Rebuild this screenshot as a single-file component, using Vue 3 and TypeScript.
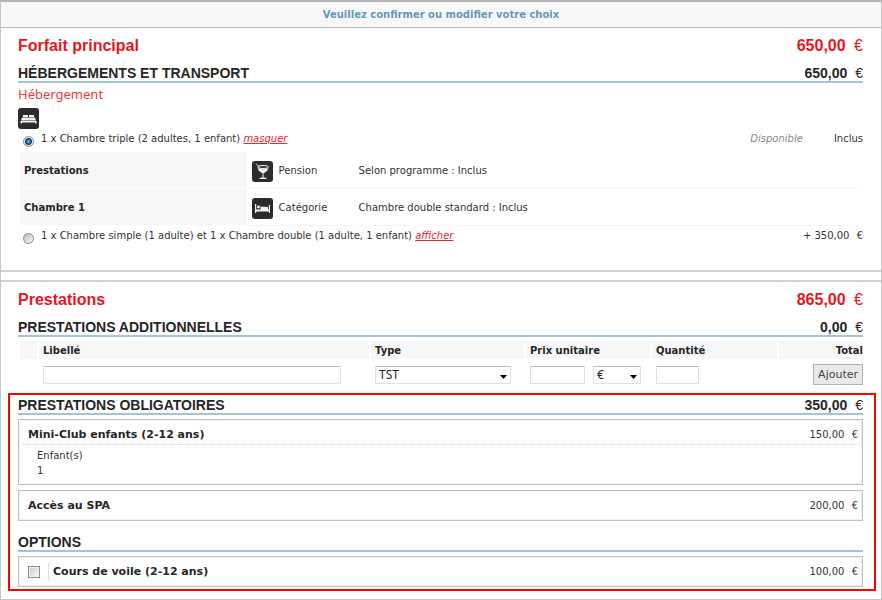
<script setup lang="ts">
import { ref } from 'vue'

interface Detail {
  label: string
  icon: 'glass' | 'bed'
  kind: string
  value: string
}

interface Extra {
  name: string
  price: string
  unit?: string
  count?: number
}

const room = ref('triple')
const label = ref('')
const kind = ref('TST')
const unitPrice = ref('')
const currency = ref('€')
const quantity = ref('')
const sailing = ref(false)

const details: Detail[] = [
  { label: 'Prestations', icon: 'glass', kind: 'Pension', value: 'Selon programme : Inclus' },
  { label: 'Chambre 1', icon: 'bed', kind: 'Catégorie', value: 'Chambre double standard : Inclus' },
]

const mandatory: Extra[] = [
  { name: 'Mini-Club enfants (2-12 ans)', price: '150,00', unit: 'Enfant(s)', count: 1 },
  { name: 'Accès au SPA', price: '200,00' },
]
</script>

<template>
  <main class="page">
    <header class="banner">Veuillez confirmer ou modifier votre choix</header>

    <section class="panel">
      <h1 class="title"><span>Forfait principal</span><span class="sum">650,00 <i class="cur">€</i></span></h1>
      <h2 class="subtitle"><span>HÉBERGEMENTS ET TRANSPORT</span><span class="sum">650,00 <i class="cur">€</i></span></h2>
      <h3 class="group">Hébergement</h3>
      <svg class="icon" viewBox="0 0 21 21" aria-hidden="true">
        <rect width="21" height="21" rx="3" fill="#2b2b2b" />
        <path d="M5 7h5v2H5zM11 7h5v2h-5zM4 9.500h13l1 3H3zM2.500 13h16v2.500h-1.500v-1H4v1H2.500z" fill="#f4f4f4" />
      </svg>

      <div class="choice">
        <input id="triple" v-model="room" class="radio" type="radio" name="room" value="triple" />
        <span class="choice-text"><label for="triple">1 x Chambre triple (2 adultes, 1 enfant)</label> <a href="#details">masquer</a></span>
        <em class="status">Disponible</em>
        <span class="cost">Inclus</span>
      </div>

      <table id="details" class="details">
        <tbody>
          <tr v-for="d in details" :key="d.label">
            <th scope="row">{{ d.label }}</th>
            <td class="kind">
              <div class="kind-in">
                <svg v-if="d.icon === 'glass'" class="icon" viewBox="0 0 21 21" aria-hidden="true">
                  <rect width="21" height="21" rx="3" fill="#2b2b2b" />
                  <path d="M4 2.500l3.500 4" stroke="#ddd" stroke-width="1" fill="none" />
                  <ellipse cx="11" cy="6" rx="5.500" ry="1.500" fill="none" stroke="#f4f4f4" />
                  <path d="M5.500 7c2 1.500 9 1.500 11 0-1 3-3 4.500-5 5v4.500c1.500 0 3 .3 3.500 1.500H7c.500-1.200 2-1.500 3.500-1.500V12c-2-.5-4-2-5-5z" fill="#f4f4f4" />
                </svg>
                <svg v-else class="icon" viewBox="0 0 21 21" aria-hidden="true">
                  <rect width="21" height="21" rx="3" fill="#2b2b2b" />
                  <path d="M3 6h1.200v5.500h12.600V7H18v8h-1.200v-1.500H4.200V15H3z" fill="#f4f4f4" />
                  <path d="M8.500 8.500l7.500.5v3H8.500z" fill="#f4f4f4" />
                  <circle cx="6.500" cy="9" r="1.400" fill="#f4f4f4" />
                </svg>
                {{ d.kind }}
              </div>
            </td>
            <td>{{ d.value }}</td>
          </tr>
        </tbody>
      </table>

      <div class="choice">
        <input id="simple" v-model="room" class="radio" type="radio" name="room" value="simple" />
        <span class="choice-text"><label for="simple">1 x Chambre simple (1 adulte) et 1 x Chambre double (1 adulte, 1 enfant)</label> <a href="#details">afficher</a></span>
        <span class="cost">+ 350,00 <i class="cur">€</i></span>
      </div>
    </section>

    <section class="panel second">
      <h1 class="title"><span>Prestations</span><span class="sum">865,00 <i class="cur">€</i></span></h1>
      <h2 class="subtitle"><span>PRESTATIONS ADDITIONNELLES</span><span class="sum">0,00 <i class="cur">€</i></span></h2>

      <table class="add">
        <colgroup>
          <col class="c-mark" /><col /><col class="c-type" /><col class="c-price" /><col class="c-qty" /><col class="c-total" />
        </colgroup>
        <thead>
          <tr>
            <th></th><th scope="col">Libellé</th><th scope="col">Type</th><th scope="col">Prix unitaire</th><th scope="col">Quantité</th><th scope="col" class="right">Total</th>
          </tr>
        </thead>
        <tbody>
          <tr>
            <td></td>
            <td><input v-model="label" class="field long" type="text" aria-label="Libellé" /></td>
            <td>
              <div class="pick kind-pick">
                <select v-model="kind" class="field" aria-label="Type"><option>TST</option></select>
                <svg class="arrow" viewBox="0 0 7 4" aria-hidden="true"><path d="M0 0h7L3.500 4z" /></svg>
              </div>
            </td>
            <td>
              <div class="pair">
                <input v-model="unitPrice" class="field price" type="text" aria-label="Prix unitaire" />
                <div class="pick cur-pick">
                  <select v-model="currency" class="field" aria-label="Devise"><option>€</option></select>
                  <svg class="arrow" viewBox="0 0 7 4" aria-hidden="true"><path d="M0 0h7L3.500 4z" /></svg>
                </div>
              </div>
            </td>
            <td><input v-model="quantity" class="field qty" type="text" aria-label="Quantité" /></td>
            <td class="right"><button class="add-btn" type="button">Ajouter</button></td>
          </tr>
        </tbody>
      </table>

      <div class="highlight">
        <h2 class="subtitle"><span>PRESTATIONS OBLIGATOIRES</span><span class="sum">350,00 <i class="cur">€</i></span></h2>
        <article v-for="m in mandatory" :key="m.name" class="card">
          <div class="card-head" :class="{ ruled: m.unit }">
            <h3>{{ m.name }}</h3>
            <span class="cost">{{ m.price }} <i class="cur">€</i></span>
          </div>
          <div v-if="m.unit" class="units">
            <span>{{ m.unit }}</span>
            <span class="count">{{ m.count }}</span>
          </div>
        </article>

        <h2 class="subtitle options"><span>OPTIONS</span></h2>
        <article class="card">
          <div class="card-head">
            <input id="sailing" v-model="sailing" class="check" type="checkbox" />
            <h3 class="split"><label for="sailing">Cours de voile (2-12 ans)</label></h3>
            <span class="cost">100,00 <i class="cur">€</i></span>
          </div>
        </article>
      </div>
    </section>
  </main>
</template>

<style>
body {
  margin: 0;
  background: #fff;
}
</style>

<style scoped>
* {
  box-sizing: border-box;
}

.page {
  border: 1px solid #c6c6c6;
  border-top: 2px solid #b4b4b4;
  color: #333;
  font: 10px/18px "DejaVu Sans", Verdana, sans-serif;
}

.banner {
  border-bottom: 1px solid #b8b8b8;
  background: #f8f8f8;
  color: #5f9ab8;
  font-weight: bold;
  line-height: 25px;
  text-align: center;
}

.panel {
  padding: 5px 18px 21px 17px;
  border-bottom: 2px solid #d0d0d0;
}

.second {
  margin-top: 8px;
  padding-bottom: 8px;
  border-top: 2px solid #d0d0d0;
  border-bottom: 0;
}

.title,
.subtitle {
  display: flex;
  justify-content: space-between;
  margin: 0;
  font-family: "Liberation Sans", Arial, sans-serif;
}

.title {
  color: #e8161c;
  font-size: 16px;
  line-height: 26px;
}

.subtitle {
  margin-top: 6px;
  border-bottom: 2px solid #a5c5d5;
  color: #262626;
  font-size: 14px;
  line-height: 16px;
}

.sum {
  white-space: nowrap;
}

.cur {
  margin-left: 4px;
  font-style: normal;
  font-weight: normal;
}

.group {
  margin: 1px 0 4px;
  color: #ee3a3a;
  font-family: "Noto Sans", sans-serif;
  font-size: 13px;
  font-weight: normal;
  line-height: 20px;
}

.icon {
  display: block;
  flex: none;
  width: 21px;
  height: 21px;
}

.choice {
  display: flex;
  align-items: flex-start;
  padding: 1px 0 4px;
}

.radio {
  appearance: none;
  width: 11px;
  height: 11px;
  margin: 6px 7px 0 5px;
  border: 1px solid #8d8d8d;
  border-radius: 50%;
  background: linear-gradient(135deg, #bbb, #fafafa);
}

.radio:checked {
  background: radial-gradient(circle, #58c8ee 0, #1d6d9b 2px, #14364f 3px, #e8eef2 4px);
}

.choice-text {
  flex: 1;
}

a {
  color: #e8262b;
  font-style: italic;
}

.status {
  margin-right: 31px;
  color: #888;
}

.cost {
  white-space: nowrap;
}

.details {
  width: calc(100% - 2px);
  margin-left: 2px;
  border-spacing: 0;
}

.details th,
.details td {
  height: 37px;
  padding: 2px 0 0;
  border-bottom: 1px solid #f6f6f6;
  text-align: left;
}

.details th {
  width: 27%;
  padding-left: 4px;
  border-right: 1px solid #fff;
  border-bottom-color: #fff;
  background: #f7f7f7;
  color: #262626;
}

.details .kind {
  width: 111px;
  padding-left: 4px;
}

.kind-in {
  display: flex;
  align-items: center;
  gap: 6px;
}

.add {
  width: calc(100% - 2px);
  margin: 4px 0 0 2px;
  border-spacing: 0;
  table-layout: fixed;
}

.c-mark {
  width: 19px;
}

.c-type {
  width: 155px;
}

.c-price {
  width: 126px;
}

.c-qty {
  width: 127px;
}

.c-total {
  width: 84px;
}

.add th {
  height: 18px;
  padding: 2px 0 0 4px;
  border-right: 2px solid #fff;
  background: #f7f7f7;
  color: #262626;
  line-height: 16px;
  text-align: left;
}

.add th:last-child {
  border-right: 0;
}

.add td {
  padding: 5px 0 8px 4px;
  line-height: 20px;
  vertical-align: middle;
}

.add .right {
  text-align: right;
}

.field {
  display: block;
  width: 100%;
  height: 18px;
  margin: 0;
  padding: 0 3px;
  border: 1px solid #dde1e8;
  border-top-color: #b9bbc0;
  border-radius: 1px;
  background: #fff;
  color: #222;
  font: 12px/16px "Noto Sans", sans-serif;
}

.field.long {
  width: 91%;
}

.field.price {
  width: 55px;
}

.field.qty {
  width: 43px;
}

select.field {
  appearance: none;
}

.pick {
  display: grid;
  align-items: center;
}

.pick > * {
  grid-area: 1 / 1;
}

.kind-pick {
  width: 136px;
}

.cur-pick {
  width: 48px;
}

.pair {
  display: flex;
  gap: 8px;
}

.arrow {
  justify-self: end;
  width: 7px;
  height: 4px;
  margin: 4px 4px 0 0;
  pointer-events: none;
}

.add-btn {
  display: block;
  height: 21px;
  margin-left: auto;
  padding: 0 4px;
  border: 1px solid #b0b0b0;
  background: #e9e9e9;
  color: #444;
  font: inherit;
  font-size: 11px;
  white-space: nowrap;
}

.highlight {
  margin: 0 -13px 0 -10px;
  padding: 2px 11px 2px 8px;
  border: 2px solid #f00;
}

.highlight .subtitle {
  margin: 0 0 4px;
}

.highlight .options {
  margin-top: 13px;
}

.card {
  padding: 6px 4px 5px;
  border: 1px solid #bac6bd;
  box-shadow: inset 0 0 0 1px #eef2ef;
}

.card + .card {
  margin-top: 5px;
}

.card-head {
  display: flex;
  align-items: center;
  padding-left: 5px;
}

.card-head h3 {
  flex: 1;
  margin: 0;
  color: #262626;
  font-size: 11px;
}

.ruled {
  border-bottom: 1px dotted #ccc;
}

.units {
  display: flex;
  flex-direction: column;
  padding: 3px 14px 1px;
  line-height: 15px;
}

.check {
  appearance: none;
  width: 12px;
  height: 12px;
  margin: 0 8px 0 0;
  border: 1px solid #8a8f94;
  background: linear-gradient(135deg, #c4c4c4, #fff);
  box-shadow: inset 0 0 0 1px #f0f0f0;
}

.check:checked {
  background: #1d6d9b;
}

.card-head .split {
  padding-left: 4px;
  border-left: 1px solid #e0e0e0;
}
</style>
